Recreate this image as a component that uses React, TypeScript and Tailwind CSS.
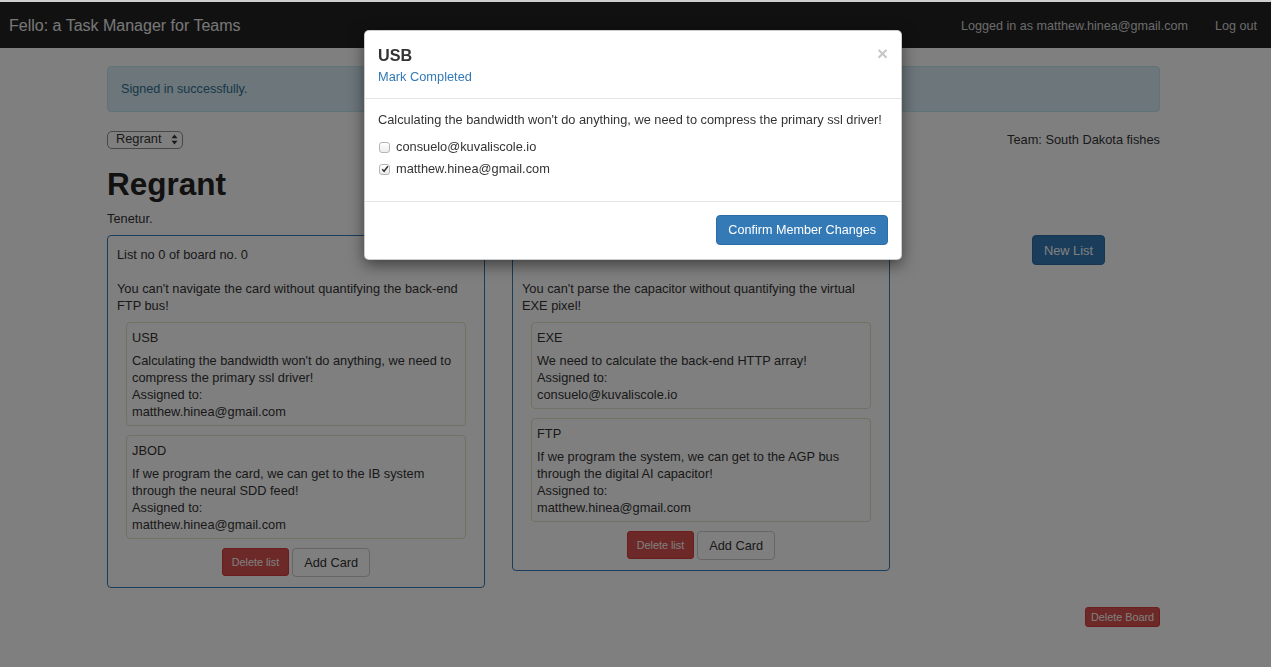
import React from "react";

const font = { fontFamily: '"Liberation Sans", Arial, Helvetica, sans-serif' };

function Card({ title, lines, email }: { title: string; lines: string; email: string }) {
  return (
    <div className="mx-[9px] mb-[9px] rounded-[4px] border border-[#dfe3c4] bg-white px-[5px] pt-[6px] pb-[5px]">
      <div className="mb-[6px] leading-[17px]">{title}</div>
      <div className="leading-[17px]">
        {lines}
        <br />
        Assigned to:
        <br />
        {email}
      </div>
    </div>
  );
}

function ListBox({
  heading,
  desc,
  children,
}: {
  heading: string;
  desc: React.ReactNode;
  children: React.ReactNode;
}) {
  return (
    <div className="w-[378px] self-start rounded-[4px] border border-[#337ab7] px-[9px] pt-[10px] pb-[10px]">
      <div className="leading-[17px]">{heading}</div>
      <p className="mt-[17px] mb-[8px] leading-[17px]">{desc}</p>
      {children}
      <div className="flex justify-center gap-[3px]">
        <button className="h-[28px] rounded-[3px] border border-[#d43f3a] bg-[#d9534f] px-[9px] text-[10.8px] text-white">
          Delete list
        </button>
        <button className="h-[29px] rounded-[4px] border border-[#ccc] bg-white px-[11px] text-[12.8px] text-[#333]">
          Add Card
        </button>
      </div>
    </div>
  );
}

export default function App() {
  return (
    <div style={font} className="relative min-h-[667px] bg-white text-[12.8px] text-[#333]">
      <div className="relative z-10 h-[2px] bg-[#cfcfcf]" />
      <nav className="flex h-[46px] items-center bg-[#222] pt-[2px] pl-[9px] pr-[14px]">
        <span className="text-[16px] text-[#eee]">Fello: a Task Manager for Teams</span>
        <div className="ml-auto flex items-center gap-[27px] text-[12.6px] text-[#d6d6d6]">
          <span>Logged in as matthew.hinea@gmail.com</span>
          <span>Log out</span>
        </div>
      </nav>

      <main className="ml-[107px] w-[1053px] pt-[18px]">
        <div className="flex h-[46px] items-center rounded-[4px] border border-[#bce8f1] bg-[#d9edf7] px-[13px] pt-[1px] text-[12.6px] text-[#31708f]">
          Signed in successfully.
        </div>

        <div className="mt-[18px] flex items-center justify-between">
          <div className="flex h-[18px] w-[76px] items-center rounded-[5px] border border-[#8e8e8e] bg-white pl-[8px] pr-[4px]">
            <span className="leading-none">Regrant</span>
            <svg className="ml-auto" width="7" height="11" viewBox="0 0 7 11">
              <path d="M3.5 0.5 L6.5 4.2 L0.5 4.2 Z" fill="#333" />
              <path d="M3.5 10.5 L6.5 6.8 L0.5 6.8 Z" fill="#333" />
            </svg>
          </div>
          <span>Team: South Dakota fishes</span>
        </div>

        <h1 className="mt-[17px] text-[31.5px] font-bold leading-[36px] text-[#222]">Regrant</h1>
        <p className="mt-[8px] leading-[17px]">Tenetur.</p>

        <div className="mt-[8px] flex items-start">
          <ListBox
            heading="List no 0 of board no. 0"
            desc="You can't navigate the card without quantifying the back-end FTP bus!"
          >
            <Card
              title="USB"
              lines="Calculating the bandwidth won't do anything, we need to compress the primary ssl driver!"
              email="matthew.hinea@gmail.com"
            />
            <Card
              title="JBOD"
              lines="If we program the card, we can get to the IB system through the neural SDD feed!"
              email="matthew.hinea@gmail.com"
            />
          </ListBox>
          <div className="ml-[27px]">
            <ListBox
              heading="List no 1 of board no. 0"
              desc={
                <>
                  You can't parse the capacitor without quantifying the virtual
                  <br />
                  EXE pixel!
                </>
              }
            >
              <Card
                title="EXE"
                lines="We need to calculate the back-end HTTP array!"
                email="consuelo@kuvaliscole.io"
              />
              <Card
                title="FTP"
                lines="If we program the system, we can get to the AGP bus through the digital AI capacitor!"
                email="matthew.hinea@gmail.com"
              />
            </ListBox>
          </div>
          <button className="ml-[142px] h-[30px] w-[73px] rounded-[4px] border border-[#2e6da4] bg-[#337ab7] text-white">
            New List
          </button>
        </div>

        <div className="mt-[19px] flex justify-end">
          <button className="h-[20px] rounded-[3px] border border-[#d43f3a] bg-[#d9534f] px-[5px] text-[10.8px] text-white">
            Delete Board
          </button>
        </div>
      </main>

      {/* backdrop */}
      <div className="fixed inset-0 bg-black/50" />

      {/* modal */}
      <div className="absolute left-[364px] top-[30px] w-[538px] rounded-[5px] border border-black/20 bg-white shadow-[0_5px_15px_rgba(0,0,0,0.5)]">
        <div className="relative border-b border-[#e5e5e5] px-[13px] pt-[15px] pb-[12px]">
          <div className="text-[16.2px] font-bold leading-[18px] text-[#333]">USB</div>
          <div className="mt-[4px] leading-[18px] text-[#337ab7]">Mark Completed</div>
          <span className="absolute right-[13px] top-[14px] text-[18.9px] font-bold leading-none text-[#c8c8c8]">
            ×
          </span>
        </div>
        <div className="border-b border-[#e5e5e5] px-[13px] pt-[12px] pb-[23px]">
          <p className="leading-[18px]">
            Calculating the bandwidth won't do anything, we need to compress the primary ssl driver!
          </p>
          <div className="mt-[9px] flex items-center leading-[18px]">
            <span className="ml-[1px] mr-[6px] h-[11px] w-[11px] rounded-[3px] border border-[#b5b5b5] bg-gradient-to-b from-white to-[#ececec]" />
            consuelo@kuvaliscole.io
          </div>
          <div className="mt-[4px] flex items-center leading-[18px]">
            <span className="ml-[1px] mr-[6px] flex h-[11px] w-[11px] items-center justify-center rounded-[3px] border border-[#b5b5b5] bg-gradient-to-b from-white to-[#ececec]">
              <svg width="8" height="8" viewBox="0 0 8 8">
                <path d="M1.2 4.3 L3.1 6.3 L6.9 1.2" fill="none" stroke="#333" strokeWidth="1.5" />
              </svg>
            </span>
            matthew.hinea@gmail.com
          </div>
        </div>
        <div className="flex justify-end px-[13px] pt-[13px] pb-[14px]">
          <button className="h-[30px] rounded-[4px] border border-[#2e6da4] bg-[#337ab7] px-[11px] text-[12.6px] text-white">
            Confirm Member Changes
          </button>
        </div>
      </div>
    </div>
  );
}
